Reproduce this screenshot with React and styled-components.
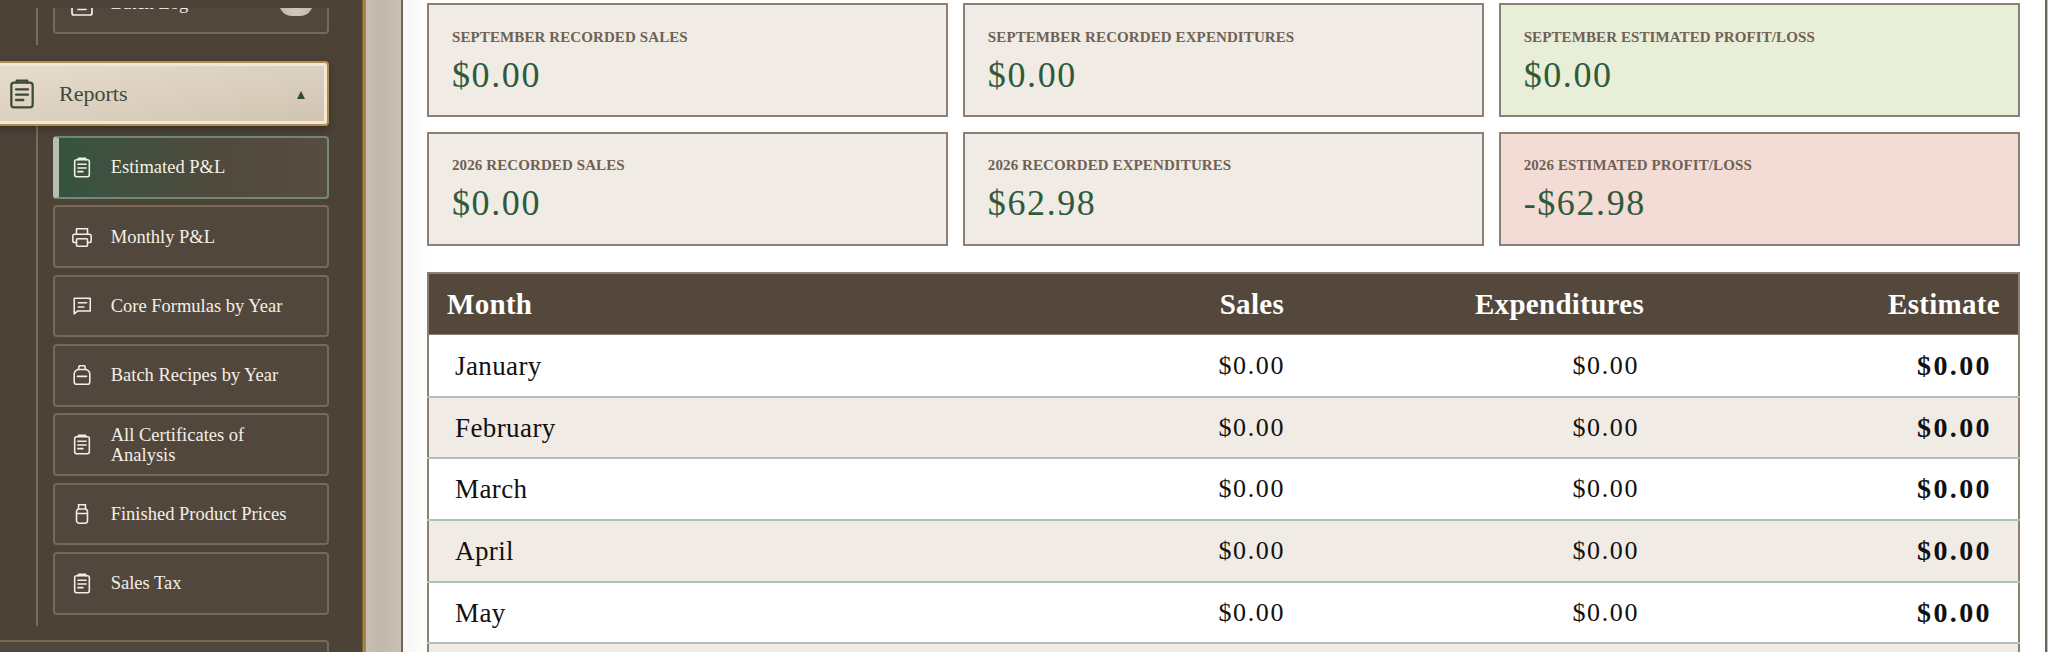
import React from 'react';
import styled, { createGlobalStyle } from 'styled-components';

const Global = createGlobalStyle`
  html, body { margin: 0; padding: 0; height: 652px; overflow: hidden; background: #fff; }
  body { font-family: "Liberation Serif", "DejaVu Serif", serif; }
`;
const Page = styled.div`
  display: flex; width: 2048px; height: 652px; overflow: hidden;
`;
const Sidebar = styled.aside`
  width: 362px; flex: none; background: #4c4238; display: flex; flex-direction: column;
  padding-top: 8px; box-sizing: border-box; overflow: hidden;
`;
const Scroller = styled.div`
  flex: 1; overflow: hidden; padding-right: 33px; display: flex; flex-direction: column;
`;
const Inner = styled.div`
  margin-top: -36.4px; display: flex; flex-direction: column;
`;
const GoldEdge = styled.div`
  width: 4px; flex: none; background: #a5853f; border-left: 1px solid #7b6538; box-sizing: border-box;
`;
const Gutter = styled.div`
  width: 35px; flex: none; background: linear-gradient(90deg, #c8bfb2, #c2b9ab 45%, #cbc2b6);
  border-right: 2px solid #6f6458;
`;
const Main = styled.main`
  flex: 1; min-width: 0; box-sizing: border-box; padding: 3.3px 0 0 24px;
  background: linear-gradient(90deg, #f6f6f5, #fff 30px);
  border-right: 2px solid #6f6458; display: flex; flex-direction: column;
`;
const EndStrip = styled.div`
  width: 1px; flex: none; background: #c8bfb2;
`;
const Cards = styled.section`
  width: 1593px; display: grid; grid-template-columns: repeat(3, 1fr); column-gap: 14.5px; row-gap: 14.7px;
`;
const Card = styled.div`
  height: 114px; box-sizing: border-box; border: 2px solid #8c7f73; padding: 21.5px 23px 0;
  background: ${p => p.$tone === 'good' ? '#e8eed7' : p.$tone === 'bad' ? '#f3dcd5' : '#f0ebe4'};
`;
const CardLabel = styled.div`
  font-size: 15px; font-weight: 700; line-height: 20px; color: #6f6154; text-transform: uppercase; letter-spacing: .1px;
`;
const CardValue = styled.div`
  margin-top: 6px; font-size: 36px; line-height: 44px; color: #2f5a3c; letter-spacing: 1.6px;
`;
const Table = styled.table`
  width: 1593px; margin-top: 26px; border-collapse: collapse; table-layout: fixed; border: 2px solid #8c7f73;
`;
const HeadRow = styled.tr`
  height: 62px; background: #54483c; color: #fff;
`;
const Th = styled.th`
  box-sizing: border-box; font-size: 29px; font-weight: 700; line-height: 32px; letter-spacing: .3px;
  padding: 0 ${p => p.$pr ?? 18}px 0 18px;
  text-align: ${p => p.$left ? 'left' : 'right'}; width: ${p => p.$w ? `${p.$w}px` : 'auto'}; border-bottom: 1px solid #8c7f73;
`;
const Row = styled.tr`
  height: 61.7px; background: ${p => p.$alt ? '#f0ebe4' : '#fff'}; color: #111; border-bottom: 2px solid #b2c0b8;
`;
const MonthCell = styled.td`
  font-size: 27px; line-height: 32px; letter-spacing: .4px; padding: 0 0 0 26px; text-align: left;
`;
const MoneyCell = styled.td`
  font-size: ${p => p.$bold ? 28 : 26}px; line-height: 32px; padding: 0 ${p => p.$pr}px 0 0; text-align: right;
  letter-spacing: ${p => p.$bold ? 2.4 : 1.6}px; font-weight: ${p => p.$bold ? 700 : 400};
`;
const Group = styled.div`
  margin-left: 36px; border-left: 2px solid #7d6d50; padding: ${p => p.$pad}; display: flex; flex-direction: column; gap: 6.85px;
`;
const NavItem = styled.div`
  height: 62.5px; box-sizing: border-box; border: 2px solid ${p => p.$active ? '#6f8a75' : '#776a54'}; border-radius: 4px;
  background: ${p => p.$active ? 'linear-gradient(90deg, #355440, #4f4a3d 55%, #574c40)' : '#51473c'};
  color: #f4efe6; display: flex; align-items: center; padding-left: 15.7px;
  ${p => p.$active ? 'border-left: 6px solid #b4c0b0; padding-left: 11.7px;' : ''}
  gap: 18px; font-size: 18.5px; line-height: 20px;
`;
const IconSlot = styled.span`
  width: ${p => p.$size ?? 22}px; height: ${p => p.$size ?? 22}px; flex: none; display: flex; align-items: center; justify-content: center;
`;
const NavLabel = styled.span`
  width: 190px;
`;
const Toggle = styled.span`
  margin-left: auto; margin-right: 14px; flex: none; width: 34px; height: 26px; border-radius: 13px;
  background: linear-gradient(90deg, #c2b9ac, #d0c8bc 50%, #c2b9ac);
`;
const ReportsButton = styled.div`
  margin: 15.700px 0 0 -12px; height: 65.5px; box-sizing: border-box; border: 2px solid #b08d4a; border-radius: 4px;
  box-shadow: inset 0 0 0 3px #f1e8d8, 0 3px 10px rgba(0,0,0,.3);
  background: linear-gradient(170deg, #e8decf, #d0c3b1); color: #3d4a3a;
  display: flex; align-items: center; padding: 0 22.5px 0 16px; font-size: 22px; gap: 21px; position: relative;
`;
const Caret = styled.span`
  margin-left: auto; width: 0; height: 0; border-left: 4.5px solid transparent; border-right: 4.5px solid transparent;
  border-bottom: 8px solid #2f4a36; margin-top: 3px;
`;
const BottomCard = styled.div`
  margin: 14px 0 0 -12px; height: 60px; border: 2px solid #776a54; border-radius: 4px; background: #51473c;
`;

const S = { fill: 'none', stroke: 'currentColor', strokeWidth: 1.7, strokeLinecap: 'round', strokeLinejoin: 'round' };
const Clip = ({ size = 25 }) => (
  <svg width={size} height={size} viewBox="0 0 24 24" {...S}>
    <rect x="4" y="3.500" width="16" height="18.500" rx="2" />
    <path d="M8 3.500V2h8v1.500M7.500 8.500h9M7.500 12.500h9M7.500 16.500h5.500" />
  </svg>
);
const LogIcon = () => (
  <svg width="22" height="27" viewBox="0 0 22 27" {...S}>
    <rect x="1" y="1" width="20" height="25" rx="2" />
    <path d="M7 20.500h8" />
  </svg>
);
const Printer = () => (
  <svg width="24" height="24" viewBox="0 0 24 24" {...S}>
    <path d="M6 9V3h12v6M6 18H4a2 2 0 0 1-2-2v-5a2 2 0 0 1 2-2h16a2 2 0 0 1 2 2v5a2 2 0 0 1-2 2h-2" />
    <rect x="6" y="14" width="12" height="8" rx="1" />
  </svg>
);
const Bubble = () => (
  <svg width="24" height="24" viewBox="0 0 24 24" {...S}>
    <path d="M3.500 3.500h17.500v14H7L3.500 20.500z" />
    <path d="M8 8.500h9M8 13h6" />
  </svg>
);
const Jar = () => (
  <svg width="24" height="24" viewBox="0 0 24 24" {...S}>
    <path d="M9 2h6l1 4c2.500.6 4.500 2.500 4.500 5v8.500a2.500 2.500 0 0 1-2.500 2.500H6a2.500 2.500 0 0 1-2.500-2.500V11c0-2.500 2-4.400 4.500-5zM8 6h8M7 13.500h10" />
  </svg>
);
const Bottle = () => (
  <svg width="24" height="24" viewBox="0 0 24 24" {...S}>
    <rect x="6" y="6.500" width="12" height="15.500" rx="3" />
    <path d="M8 2h8M8.500 2L8 6.500M15.500 2l.5 4.500M6 11.500h12" />
  </svg>
);

const items = [
  ['Monthly P&L', <Printer />], ['Core Formulas by Year', <Bubble />], ['Batch Recipes by Year', <Jar />],
  ['All Certificates of Analysis', <Clip />], ['Finished Product Prices', <Bottle />], ['Sales Tax', <Clip />],
];
const cards = [
  ['September Recorded Sales', '$0.00'], ['September Recorded Expenditures', '$0.00'], ['September Estimated Profit/Loss', '$0.00', 'good'],
  ['2026 Recorded Sales', '$0.00'], ['2026 Recorded Expenditures', '$62.98'], ['2026 Estimated Profit/Loss', '-$62.98', 'bad'],
];
const months = ['January', 'February', 'March', 'April', 'May', 'June'];

export default function App() {
  return (
    <Page>
      <Global />
      <Sidebar>
        <Scroller>
          <Inner>
            <Group $pad="0 0 11px 15px">
              <NavItem>
                <IconSlot><LogIcon /></IconSlot>
                <NavLabel>Batch Log</NavLabel>
                <Toggle />
              </NavItem>
            </Group>
            <ReportsButton>
              <IconSlot $size={32}><Clip size={32} /></IconSlot>
              Reports
              <Caret />
            </ReportsButton>
            <Group $pad="9.8px 0 11.5px 15px">
              <NavItem $active>
                <IconSlot><Clip /></IconSlot>
                <NavLabel>Estimated P&amp;L</NavLabel>
              </NavItem>
              {items.map(([label, icon]) => (
                <NavItem key={label}>
                  <IconSlot>{icon}</IconSlot>
                  <NavLabel>{label}</NavLabel>
                </NavItem>
              ))}
            </Group>
            <BottomCard />
          </Inner>
        </Scroller>
      </Sidebar>
      <GoldEdge />
      <Gutter />
      <Main>
        <Cards>
          {cards.map(([l, v, t]) => (
            <Card key={l} $tone={t}>
              <CardLabel>{l}</CardLabel>
              <CardValue>{v}</CardValue>
            </Card>
          ))}
        </Cards>
        <Table>
          <thead>
            <HeadRow>
              <Th $left $w={600}>Month</Th>
              <Th $w={263} $pr={7}>Sales</Th>
              <Th $w={361} $pr={8}>Expenditures</Th>
              <Th>Estimate</Th>
            </HeadRow>
          </thead>
          <tbody>
            {months.map((m, i) => (
              <Row key={m} $alt={i % 2 === 1}>
                <MonthCell>{m}</MonthCell>
                <MoneyCell $pr={6}>$0.00</MoneyCell>
                <MoneyCell $pr={13}>$0.00</MoneyCell>
                <MoneyCell $bold $pr={26}>$0.00</MoneyCell>
              </Row>
            ))}
          </tbody>
        </Table>
      </Main>
      <EndStrip />
    </Page>
  );
}
